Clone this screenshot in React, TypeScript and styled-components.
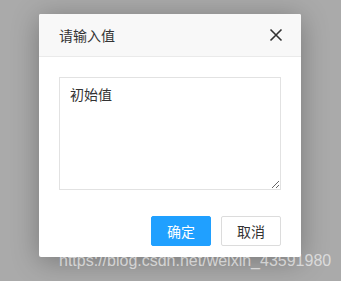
import styled, { createGlobalStyle } from 'styled-components'

const GlobalStyle = createGlobalStyle`
  html, body {
    margin: 0;
    padding: 0;
    background: #aaaaaa;
    font-family: "Noto Sans CJK SC", "Liberation Sans", sans-serif;
  }
`

const Page = styled.div`
  position: relative;
  width: 341px;
  height: 281px;
  overflow: hidden;
  padding-top: 14px;
  padding-left: 39px;
  box-sizing: border-box;
`

const Dialog = styled.div`
  width: 262px;
  background: #fff;
  border-radius: 2px;
  box-shadow: 0 4px 28px rgba(0, 0, 0, 0.3);
  overflow: hidden;
`

const Header = styled.div`
  height: 42px;
  display: flex;
  align-items: center;
  justify-content: space-between;
  padding: 0 18px 0 20px;
  background: #f8f8f8;
  border-bottom: 1px solid #eaeaea;
`

const Title = styled.span`
  font-size: 14px;
  color: #333;
`

const Close = styled.button`
  border: 0;
  background: none;
  padding: 0;
  width: 14px;
  height: 14px;
  display: flex;
  cursor: pointer;
`

const Body = styled.div`
  padding: 20px 20px 0;
`

const Input = styled.textarea`
  display: block;
  width: 222px;
  height: 113px;
  box-sizing: border-box;
  border: 1px solid #e2e2e2;
  padding: 6px 10px;
  font-family: inherit;
  font-size: 14px;
  color: #333;
  resize: both;
  outline: none;
`

const Footer = styled.div`
  display: flex;
  justify-content: flex-end;
  gap: 10px;
  padding: 26px 20px 11px;
`

const Button = styled.button<{ $primary?: boolean }>`
  width: 60px;
  height: 30px;
  border-radius: 2px;
  font-family: inherit;
  font-size: 14px;
  border: 1px solid ${p => (p.$primary ? '#20a0ff' : '#dcdcdc')};
  background: ${p => (p.$primary ? '#20a0ff' : '#fff')};
  color: ${p => (p.$primary ? '#fff' : '#333')};
  padding: 0;
`

const Watermark = styled.div`
  position: absolute;
  left: 59px;
  top: 252px;
  font-family: "Liberation Sans", Arial, sans-serif;
  font-size: 16px;
  color: rgba(255, 255, 255, 0.6);
  white-space: nowrap;
`

export default function App() {
  return (
    <Page>
      <GlobalStyle />
      <Dialog>
        <Header>
          <Title>请输入值</Title>
          <Close>
            <svg width="14" height="14" viewBox="0 0 14 14">
              <path d="M1.5 1.5 L12.5 12.5 M12.5 1.5 L1.5 12.5" stroke="#333" strokeWidth="1.6" />
            </svg>
          </Close>
        </Header>
        <Body>
          <Input defaultValue="初始值" />
        </Body>
        <Footer>
          <Button $primary>确定</Button>
          <Button>取消</Button>
        </Footer>
      </Dialog>
      <Watermark>https://blog.csdn.net/weixin_43591980</Watermark>
    </Page>
  )
}
